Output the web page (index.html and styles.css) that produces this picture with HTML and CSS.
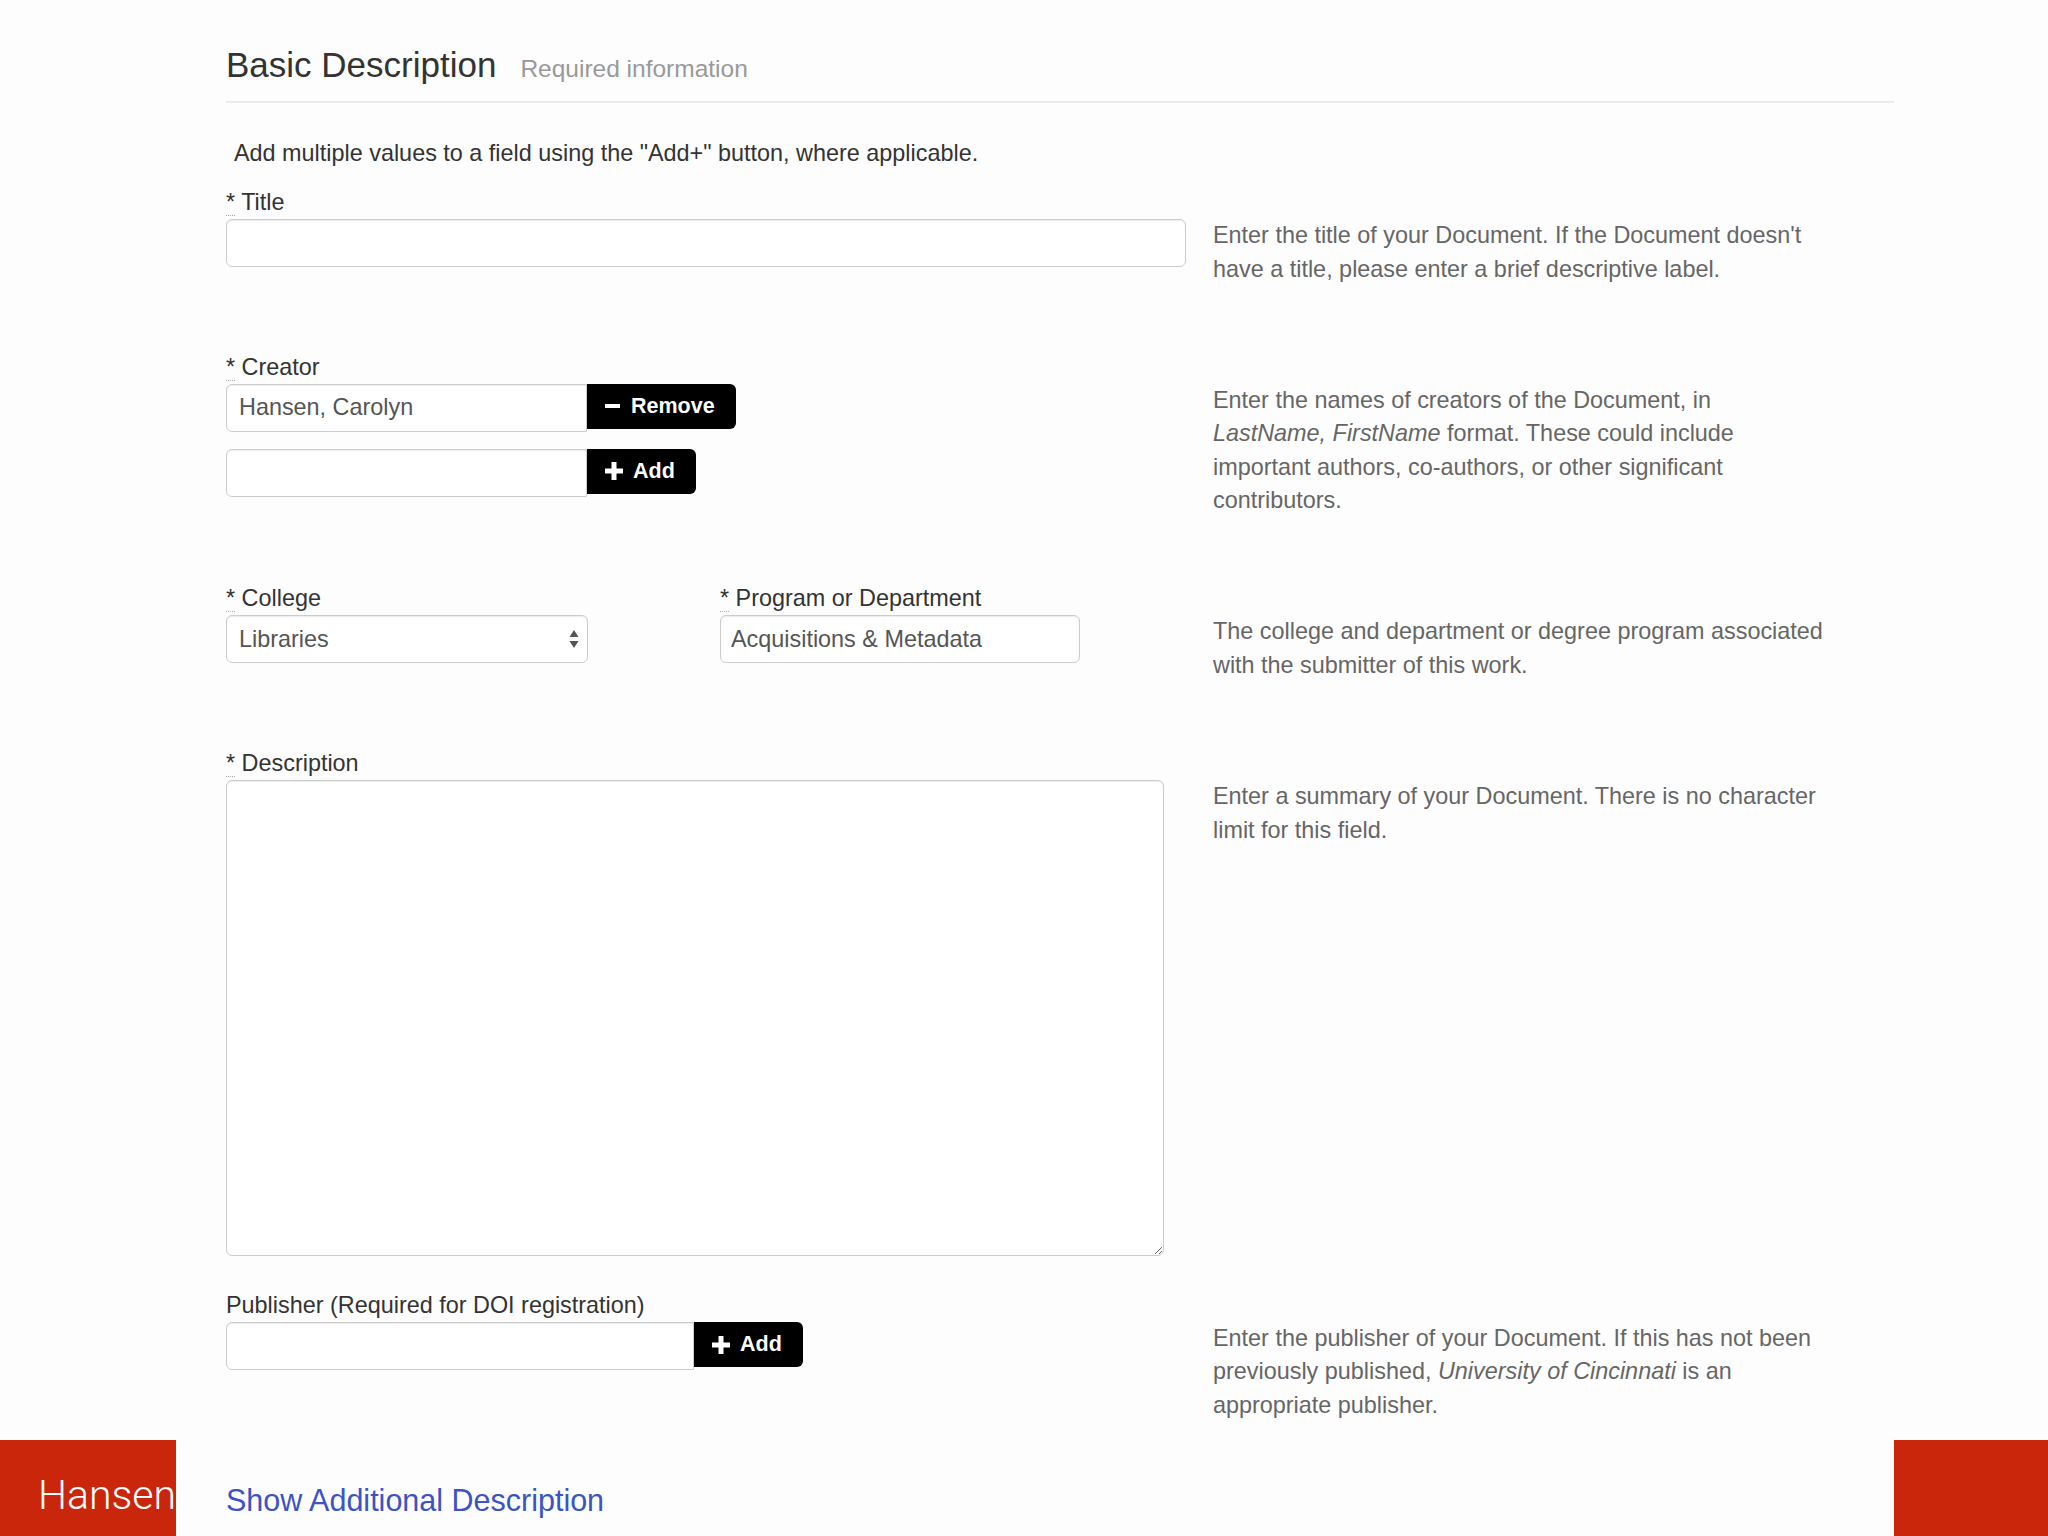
FILE: index.html
```html
<!DOCTYPE html>
<html lang="en">
<head>
    <meta charset="UTF-8">
    <title>Basic Description</title>
    <link rel="stylesheet" href="styles.css">
</head>
<body>
    <main class="content">
        <div class="section-head">
            <h2>Basic Description</h2>
            <small>Required information</small>
        </div>

        <p class="intro">Add multiple values to a field using the "Add+" button, where applicable.</p>

        <div class="field-row">
            <div class="field">
                <label><abbr title="required">*</abbr> Title</label>
                <input type="text" class="form-control title-input">
            </div>
            <p class="help">Enter the title of your Document. If the Document doesn't<br>have a title, please enter a brief descriptive label.</p>
        </div>

        <div class="field-row">
            <div class="field">
                <label><abbr title="required">*</abbr> Creator</label>
                <div class="input-group">
                    <input type="text" class="form-control creator-input" value="Hansen, Carolyn">
                    <button class="btn">
                        <svg width="16" height="16" viewBox="0 0 16 16"><rect x="0" y="6" width="15" height="4" fill="#fff"/></svg>
                        Remove
                    </button>
                </div>
                <div class="input-group">
                    <input type="text" class="form-control creator-input">
                    <button class="btn">
                        <svg width="18" height="18" viewBox="0 0 18 18"><rect x="0" y="6.5" width="18" height="5" fill="#fff"/><rect x="6.5" y="0" width="5" height="18" fill="#fff"/></svg>
                        Add
                    </button>
                </div>
            </div>
            <p class="help">Enter the names of creators of the Document, in<br><em>LastName, FirstName</em> format. These could include<br>important authors, co-authors, or other significant<br>contributors.</p>
        </div>

        <div class="field-row">
            <div class="field split">
                <div>
                    <label><abbr title="required">*</abbr> College</label>
                    <div class="select-wrap">
                        <select class="form-control">
                            <option>Libraries</option>
                        </select>
                        <svg class="select-arrows" width="10" height="20" viewBox="0 0 10 20"><path d="M5 1 L9.5 8 H0.5 Z M5 19 L9.5 12 H0.5 Z" fill="#555"/></svg>
                    </div>
                </div>
                <div>
                    <label><abbr title="required">*</abbr> Program or Department</label>
                    <input type="text" class="form-control program-input" value="Acquisitions &amp; Metadata">
                </div>
            </div>
            <p class="help">The college and department or degree program associated<br>with the submitter of this work.</p>
        </div>

        <div class="field-row">
            <div class="field">
                <label><abbr title="required">*</abbr> Description</label>
                <textarea class="form-control description-input"></textarea>
            </div>
            <p class="help">Enter a summary of your Document. There is no character<br>limit for this field.</p>
        </div>

        <div class="field-row">
            <div class="field">
                <label>Publisher (Required for DOI registration)</label>
                <div class="input-group">
                    <input type="text" class="form-control publisher-input">
                    <button class="btn">
                        <svg width="18" height="18" viewBox="0 0 18 18"><rect x="0" y="6.5" width="18" height="5" fill="#fff"/><rect x="6.5" y="0" width="5" height="18" fill="#fff"/></svg>
                        Add
                    </button>
                </div>
            </div>
            <p class="help">Enter the publisher of your Document. If this has not been<br>previously published, <em>University of Cincinnati</em> is an<br>appropriate publisher.</p>
        </div>
    </main>

    <footer class="slide-footer">
        <div class="slide-name">Hansen</div>
        <div class="footer-middle">
            <a href="#" class="show-more">Show Additional Description</a>
        </div>
        <div class="slide-corner"></div>
    </footer>
</body>
</html>
```

FILE: styles.css
```css
:root {
    --text: #333;
    --muted: #999;
    --help: #666;
    --border: #ccc;
    --slide-red: #c9260b;
    --link: #3b53c5;
}

body {
    margin: 0;
    height: 1536px;
    display: flex;
    flex-direction: column;
    overflow: hidden;
    background: #fdfdfd;
    color: var(--text);
    font-family: "Liberation Sans", Arial, Helvetica, sans-serif;
    font-size: 23.4px;
    line-height: 33.4px;
}

.content {
    flex: 1;
    min-height: 0;
    padding: 0 154px 0 226px;
}

.section-head {
    display: flex;
    align-items: baseline;
    gap: 24px;
    padding: 46px 0 16px;
    border-bottom: 2px solid #ebebeb;
}

.section-head h2 {
    margin: 0;
    font-size: 35px;
    line-height: 38px;
    font-weight: normal;
}

.section-head small {
    font-size: 24.5px;
    color: var(--muted);
}

.intro {
    margin: 34px 0 15px;
    padding-left: 8px;
}

.field-row {
    display: grid;
    grid-template-columns: 960px 1fr;
    column-gap: 27px;
    align-items: start;
}

.field {
    padding-bottom: 32.5px;
}

.field label {
    display: block;
}

abbr {
    text-decoration: none;
    border-bottom: 1px dotted #aaa;
}

.help {
    margin: 0;
    padding: 33.4px 0 64.5px;
    color: var(--help);
}

.field-row:last-child .help {
    padding-bottom: 0;
}

.form-control {
    display: block;
    box-sizing: border-box;
    height: 48px;
    margin: 0;
    padding: 0 12px;
    background: #fff;
    border: 1px solid var(--border);
    border-radius: 6px;
    box-shadow: inset 0 1px 1px rgba(0,0,0,0.075);
    color: #555;
    font-family: inherit;
    font-size: 23.4px;
}

.title-input { width: 960px; }
.creator-input { width: 361px; }
.publisher-input { width: 468px; }
.program-input { width: 360px; padding-left: 10px; }

.description-input {
    width: 938px;
    height: 476px;
    resize: vertical;
}

.input-group {
    display: flex;
    align-items: flex-start;
    margin-bottom: 17px;
}

.input-group:last-child {
    margin-bottom: 0;
}

.input-group .form-control {
    border-top-right-radius: 0;
    border-bottom-right-radius: 0;
}

.btn {
    display: flex;
    align-items: center;
    gap: 10px;
    height: 45px;
    padding: 0 21px 0 18px;
    background: #000;
    color: #fff;
    border: none;
    border-radius: 0 6px 6px 0;
    font-family: inherit;
    font-size: 21.5px;
    font-weight: bold;
    cursor: pointer;
}

.split {
    display: grid;
    grid-template-columns: 362px 360px;
    column-gap: 132px;
}

.select-wrap {
    position: relative;
    width: 362px;
}

.select-wrap select {
    width: 100%;
    padding-left: 12px;
    appearance: none;
    -webkit-appearance: none;
}

.select-arrows {
    position: absolute;
    right: 9px;
    top: 14px;
}

.slide-footer {
    display: flex;
    flex-shrink: 0;
    height: 96px;
}

.slide-name {
    width: 176px;
    background: var(--slide-red);
    color: #fff;
    font-family: "Roboto", "Liberation Sans", sans-serif;
    font-weight: 300;
    font-size: 41px;
    line-height: 110px;
    text-align: right;
    white-space: nowrap;
    overflow: hidden;
}

.footer-middle {
    flex: 1;
    padding: 44px 0 0 50px;
}

.show-more {
    color: var(--link);
    text-decoration: none;
    font-size: 30.5px;
}

.slide-corner {
    width: 154px;
    background: var(--slide-red);
}
```
